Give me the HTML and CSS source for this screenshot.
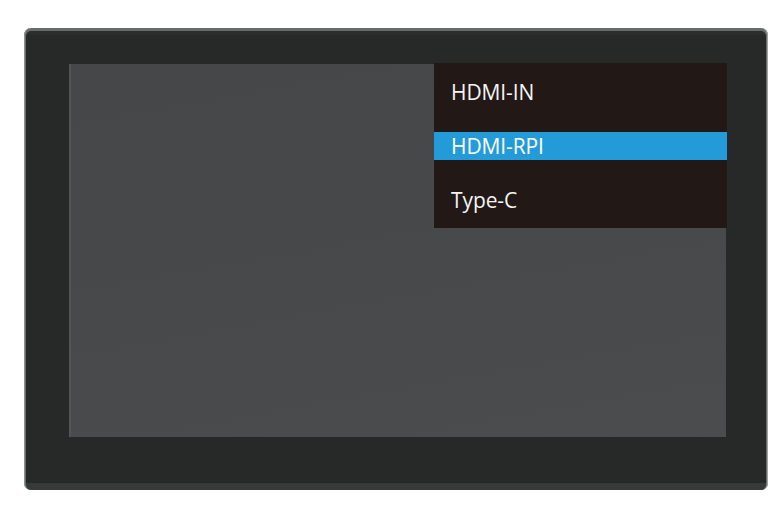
FILE: index.html
```html
<!DOCTYPE html>
<html>
<head>
<meta charset="utf-8">
<link rel="stylesheet" href="styles.css">
</head>
<body>
<div class="device">
  <div class="bezel">
    <div class="screen">
      <div class="menu">
        <div class="item">HDMI-IN</div>
        <div class="item selected">HDMI-RPI</div>
        <div class="item">Type-C</div>
      </div>
    </div>
  </div>
</div>
</body>
</html>
```
FILE: styles.css
```css
html, body {
  margin: 0;
  padding: 0;
  background: #ffffff;
  width: 784px;
  height: 512px;
  overflow: hidden;
}
body {
  padding: 28px 0 0 24px;
  box-sizing: border-box;
}
.device {
  width: 744px;
  height: 462px;
  box-sizing: border-box;
  border-radius: 7px;
  background: #6a6b6b;
  padding: 3px 2px 0 2px;
  box-shadow: inset 1px 0 0 #8e8f8f, inset -1px 0 0 #a0a1a1;
}
.bezel {
  height: 100%;
  box-sizing: border-box;
  border-radius: 5px;
  background: #272828;
  border-top: 4px solid #2c2d2d;
  border-bottom: 7px solid #383939;
  padding: 29px 40px 46px 43px;
  display: flex;
}
.screen {
  flex: 1;
  background: linear-gradient(170deg, #464748 0%, #48494a 55%, #4b4c4d 100%);
  border-left: 2px solid #535455;
  display: flex;
  justify-content: flex-end;
  align-items: flex-start;
}
.menu {
  width: 293px;
  margin-top: -1px;
  margin-right: -1px;
  background: #221816;
  padding: 15px 0 14px 0;
  display: flex;
  flex-direction: column;
  gap: 26px;
}
.item {
  height: 28px;
  line-height: 28px;
  padding-left: 17px;
  font-family: "Open Sans", "Liberation Sans", sans-serif;
  font-size: 21px;
  color: #f4f4f4;
  letter-spacing: -0.1px;
}
.item.selected {
  background: #229bd8;
  color: #ffffff;
}
```
